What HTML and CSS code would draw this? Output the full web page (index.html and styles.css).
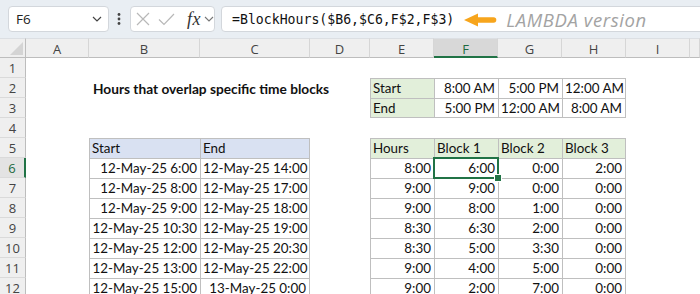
FILE: index.html
```html
<!DOCTYPE html>
<html>
<head>
<meta charset="utf-8">
<link rel="stylesheet" href="styles.css">
</head>
<body>
<div class="app">
  <div class="toolbar">
    <div class="namebox">
      <span class="nb-text">F6</span>
      <svg class="chev" width="10" height="6" viewBox="0 0 10 6"><polyline points="1,1 5,5 9,1" fill="none" stroke="#444" stroke-width="1.2"/></svg>
    </div>
    <svg class="dots" width="20" height="26" viewBox="0 0 20 26"><circle cx="10" cy="8.5" r="1.4" fill="#444"/><circle cx="10" cy="13" r="1.4" fill="#444"/><circle cx="10" cy="17.5" r="1.4" fill="#444"/></svg>
    <div class="fxbox">
      <svg class="ico-x" width="14" height="14" viewBox="0 0 14 14"><path d="M1 1 L13 13 M13 1 L1 13" stroke="#b8b8b8" stroke-width="1.2" fill="none"/></svg>
      <svg class="ico-ok" width="17" height="13" viewBox="0 0 17 13"><polyline points="1,6.5 6,11.5 16,1" stroke="#b8b8b8" stroke-width="1.2" fill="none"/></svg>
      <span class="fx">fx</span>
      <svg class="chev2" width="10" height="6" viewBox="0 0 10 6"><polyline points="1,1 5,5 9,1" fill="none" stroke="#777" stroke-width="1.1"/></svg>
    </div>
    <div class="formula">
      <span class="ftext">=BlockHours($B6,$C6,F$2,F$3)</span>
      <svg class="arrow" width="34" height="16" viewBox="0 0 34 16"><polygon points="1,8 15,1.5 15,14.5" fill="#f7a51c"/><line x1="14" y1="8" x2="30.5" y2="8" stroke="#f7a51c" stroke-width="5.6" stroke-linecap="round"/></svg>
      <span class="note">LAMBDA version</span>
    </div>
  </div>

  <div class="sheet">
    <!-- header row -->
    <div class="corner"><svg width="14" height="14" viewBox="0 0 14 14"><polygon points="14,1 14,14 1,14" fill="#d4d4d4"/></svg></div>
    <div class="ch">A</div><div class="ch">B</div><div class="ch">C</div><div class="ch">D</div><div class="ch">E</div><div class="ch ch-sel">F</div><div class="ch">G</div><div class="ch">H</div><div class="ch">I</div><div class="ch"></div>

    <!-- row 1 -->
    <div class="rh">1</div><div class="c"></div><div class="c"></div><div class="c"></div><div class="c"></div><div class="c"></div><div class="c"></div><div class="c"></div><div class="c"></div><div class="c"></div><div class="c"></div>

    <!-- row 2 -->
    <div class="rh">2</div><div class="c"></div><div class="c title">Hours that overlap specific time blocks</div><div class="c"></div><div class="c"></div><div class="c b g">Start</div><div class="c b r">8:00 AM</div><div class="c b r">5:00 PM</div><div class="c b br r">12:00 AM</div><div class="c"></div><div class="c"></div>

    <!-- row 3 -->
    <div class="rh">3</div><div class="c"></div><div class="c"></div><div class="c"></div><div class="c"></div><div class="c b bb g">End</div><div class="c b bb r">5:00 PM</div><div class="c b bb r">12:00 AM</div><div class="c b bb br r">8:00 AM</div><div class="c"></div><div class="c"></div>

    <!-- row 4 -->
    <div class="rh">4</div><div class="c"></div><div class="c"></div><div class="c"></div><div class="c"></div><div class="c"></div><div class="c"></div><div class="c"></div><div class="c"></div><div class="c"></div><div class="c"></div>

    <!-- row 5 -->
    <div class="rh">5</div><div class="c"></div><div class="c b bl">Start</div><div class="c b br bl">End</div><div class="c"></div><div class="c b g">Hours</div><div class="c b g">Block 1</div><div class="c b g">Block 2</div><div class="c b br g">Block 3</div><div class="c"></div><div class="c"></div>

    <!-- row 6 -->
    <div class="rh rh-sel">6</div><div class="c"></div><div class="c b r">12-May-25 6:00</div><div class="c b br r">12-May-25 14:00</div><div class="c"></div><div class="c b r">8:00</div><div class="c b r sel">6:00</div><div class="c b r">0:00</div><div class="c b br r">2:00</div><div class="c"></div><div class="c"></div>

    <!-- row 7 -->
    <div class="rh">7</div><div class="c"></div><div class="c b r">12-May-25 8:00</div><div class="c b br r">12-May-25 17:00</div><div class="c"></div><div class="c b r">9:00</div><div class="c b r">9:00</div><div class="c b r">0:00</div><div class="c b br r">0:00</div><div class="c"></div><div class="c"></div>

    <!-- row 8 -->
    <div class="rh">8</div><div class="c"></div><div class="c b r">12-May-25 9:00</div><div class="c b br r">12-May-25 18:00</div><div class="c"></div><div class="c b r">9:00</div><div class="c b r">8:00</div><div class="c b r">1:00</div><div class="c b br r">0:00</div><div class="c"></div><div class="c"></div>

    <!-- row 9 -->
    <div class="rh">9</div><div class="c"></div><div class="c b r">12-May-25 10:30</div><div class="c b br r">12-May-25 19:00</div><div class="c"></div><div class="c b r">8:30</div><div class="c b r">6:30</div><div class="c b r">2:00</div><div class="c b br r">0:00</div><div class="c"></div><div class="c"></div>

    <!-- row 10 -->
    <div class="rh">10</div><div class="c"></div><div class="c b r">12-May-25 12:00</div><div class="c b br r">12-May-25 20:30</div><div class="c"></div><div class="c b r">8:30</div><div class="c b r">5:00</div><div class="c b r">3:30</div><div class="c b br r">0:00</div><div class="c"></div><div class="c"></div>

    <!-- row 11 -->
    <div class="rh">11</div><div class="c"></div><div class="c b r">12-May-25 13:00</div><div class="c b br r">12-May-25 22:00</div><div class="c"></div><div class="c b r">9:00</div><div class="c b r">4:00</div><div class="c b r">5:00</div><div class="c b br r">0:00</div><div class="c"></div><div class="c"></div>

    <!-- row 12 -->
    <div class="rh">12</div><div class="c"></div><div class="c b r">12-May-25 15:00</div><div class="c b br r">13-May-25 0:00</div><div class="c"></div><div class="c b r">9:00</div><div class="c b r">2:00</div><div class="c b r">7:00</div><div class="c b br r">0:00</div><div class="c"></div><div class="c"></div>
  </div>
</div>
</body>
</html>
```

FILE: styles.css
```css
* { box-sizing: border-box; }

body {
  margin: 0;
  background: #ffffff;
  font-family: Lato, "Liberation Sans", sans-serif;
}

.app {
  width: 700px;
  height: 294px;
  overflow: hidden;
  background: #ffffff;
}

/* ---------- toolbar ---------- */
.toolbar {
  height: 38px;
  background: #e9eef3;
  display: flex;
  align-items: flex-start;
  padding: 6px 0 0 8px;
  overflow: hidden;
}

.namebox {
  width: 101px;
  height: 26px;
  background: #ffffff;
  border: 1px solid #d3d7dc;
  border-radius: 4px;
  display: flex;
  align-items: center;
  justify-content: space-between;
  padding: 0 6px 0 7px;
  flex: none;
}

.nb-text {
  font-family: "Open Sans", "Noto Sans", sans-serif;
  font-size: 13.5px;
  color: #222;
}

.dots {
  flex: none;
  display: block;
}

.fxbox {
  flex: none;
  margin-left: 1px;
  width: 85px;
  height: 26px;
  background: #ffffff;
  border: 1px solid #d3d7dc;
  border-radius: 4px;
  display: flex;
  align-items: center;
  padding-left: 5px;
}

.ico-x { display: block; margin-left: 0; }
.ico-ok { display: block; margin-left: 8px; }

.fx {
  font-family: "Liberation Serif", "DejaVu Serif", serif;
  font-style: italic;
  font-size: 18px;
  color: #333;
  margin-left: 12px;
  line-height: 24px;
  letter-spacing: 0.5px;
}

.chev2 { display: block; margin-left: 3px; }

.formula {
  flex: none;
  width: 500px;
  margin-left: 6px;
  height: 26px;
  background: #ffffff;
  border: 1px solid #d3d7dc;
  border-radius: 4px;
  display: flex;
  align-items: center;
  padding-left: 10px;
}

.ftext {
  font-family: "DejaVu Sans Mono", "Liberation Mono", monospace;
  font-size: 13.2px;
  color: #111;
  white-space: nowrap;
}

.arrow {
  display: block;
  margin-left: 9px;
  margin-top: 1px;
}

.note {
  font-family: "Open Sans", "Noto Sans", sans-serif;
  font-style: italic;
  font-size: 18.5px;
  letter-spacing: 0.6px;
  color: #a3a3a3;
  margin-left: 9px;
  white-space: nowrap;
}

/* ---------- sheet ---------- */
.sheet {
  display: grid;
  grid-template-columns: 26px 63px 111px 110px 60px 64px 64px 64px 64px 64px 1fr;
  grid-auto-rows: 20px;
}

.corner {
  background: #efefef;
  border-right: 1px solid #bdbdbd;
  border-bottom: 1px solid #bdbdbd;
  border-top: 1px solid #dcdfe3;
  display: flex;
  align-items: flex-end;
  justify-content: flex-end;
  padding: 0 2px 2px 0;
}

.corner svg { display: block; }

.ch {
  background: #efefef;
  border-top: 1px solid #dcdfe3;
  border-right: 1px solid #d6d6d6;
  border-bottom: 1px solid #bdbdbd;
  font-family: "Open Sans", "Noto Sans", sans-serif;
  font-size: 13px;
  color: #444;
  text-align: center;
  line-height: 19px;
  padding-top: 1px;
}

.ch-sel {
  background: #d8d8d8;
  color: #1e6b41;
  border-bottom: 2px solid #217346;
}

.rh {
  background: #efefef;
  border-right: 1px solid #bdbdbd;
  border-bottom: 1px solid #dadada;
  font-family: "Open Sans", "Noto Sans", sans-serif;
  font-size: 13px;
  color: #444;
  text-align: center;
  line-height: 20px;
}

.rh-sel {
  background: #e3e3e3;
  color: #1e6b41;
  border-right: 2px solid #217346;
}

.c {
  border-top: 1px solid transparent;
  border-left: 1px solid transparent;
  font-size: 13.4px;
  line-height: 19px;
  color: #111;
  padding: 0 3px 0 2px;
  white-space: nowrap;
  overflow: visible;
}

.b {
  border-top-color: #bfbfbf;
  border-left-color: #bfbfbf;
}

.br { border-right: 1px solid #bfbfbf; }
.bb { border-bottom: 1px solid #bfbfbf; }

.r { text-align: right; }

.g { background: #e2efda; }
.bl { background: #d9e1f2; }

.title {
  font-weight: bold;
  font-size: 13.7px;
  padding-left: 3px;
}

.sel {
  position: relative;
  z-index: 2;
}

.sel::before {
  content: "";
  position: absolute;
  top: -2px;
  left: -2px;
  right: -1px;
  bottom: -1px;
  border: 2px solid #217346;
}

.sel::after {
  content: "";
  position: absolute;
  right: -4px;
  bottom: -4px;
  width: 6px;
  height: 6px;
  background: #217346;
  border: 1px solid #ffffff;
}
```
